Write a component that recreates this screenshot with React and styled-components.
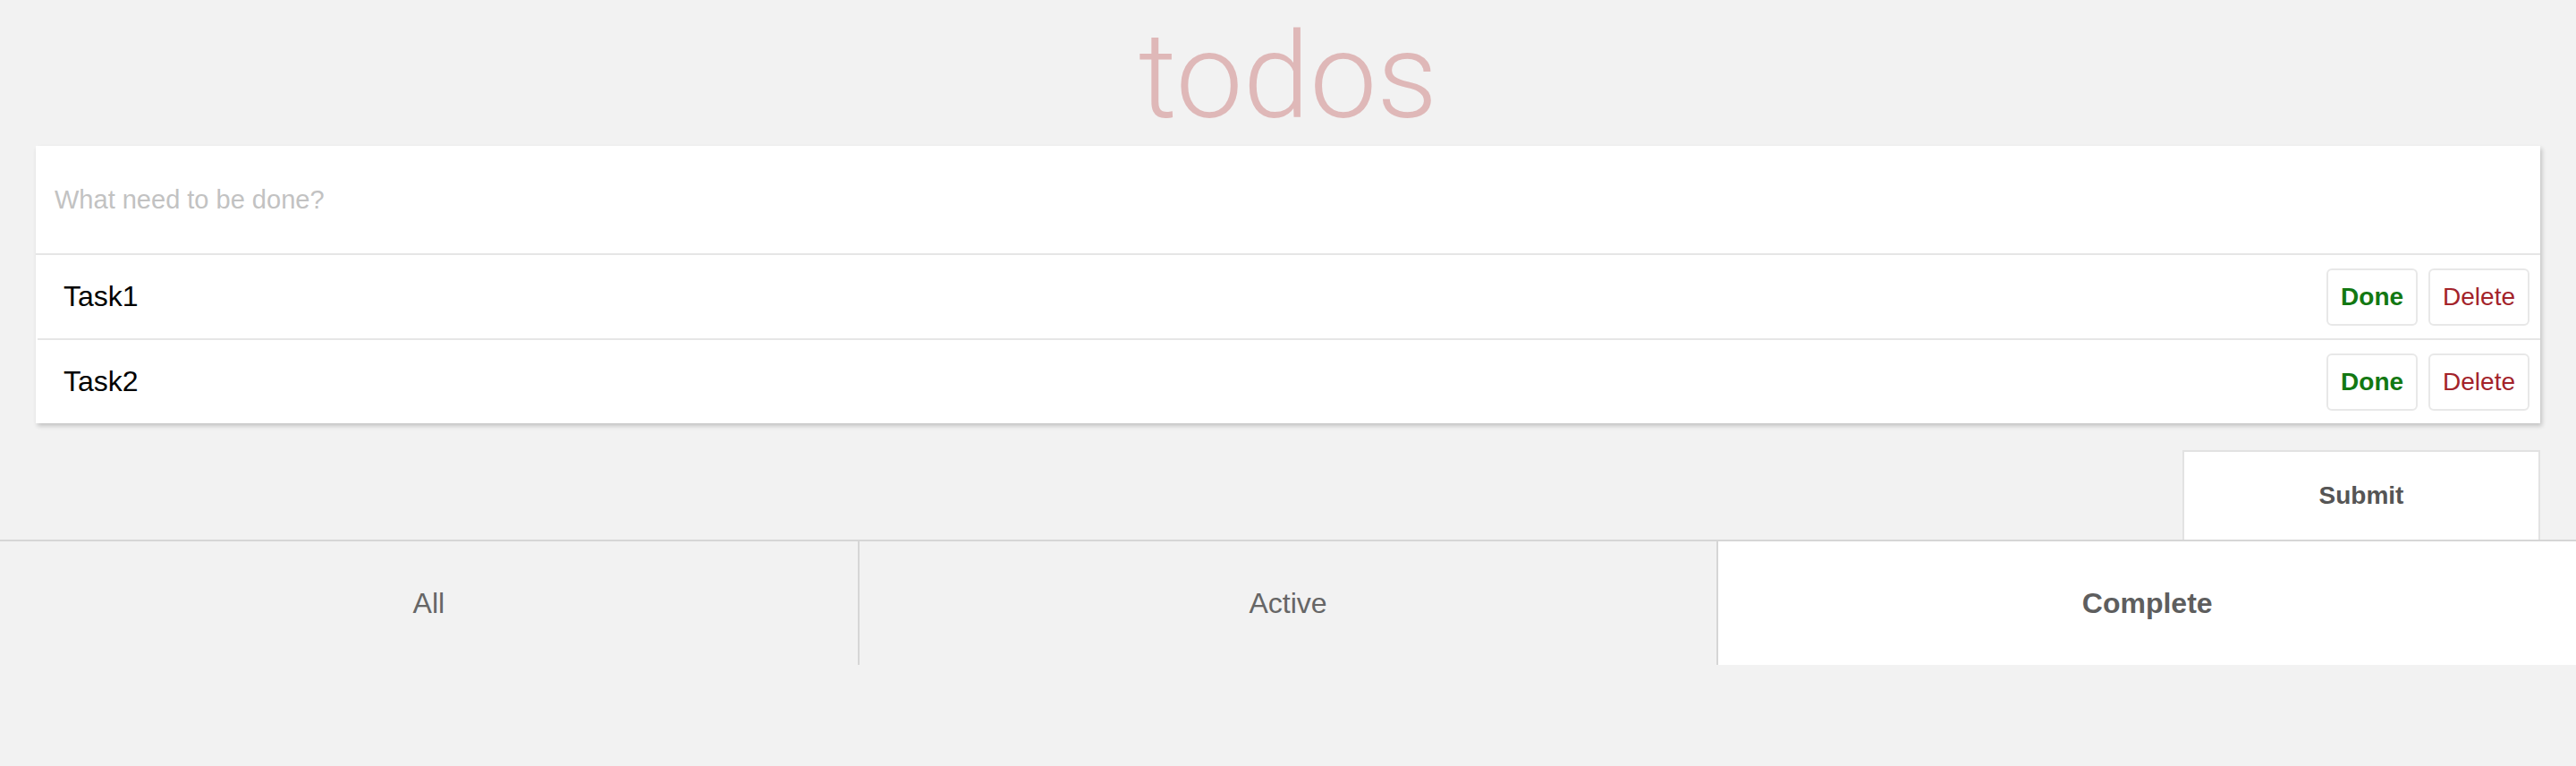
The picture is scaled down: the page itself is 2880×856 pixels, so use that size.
import React, { useState } from 'react'
import styled, { createGlobalStyle } from 'styled-components'

const GlobalStyle = createGlobalStyle`
  html, body {
    margin: 0;
    padding: 0;
    background: #f2f2f2;
    font-family: "Liberation Sans", Arial, sans-serif;
  }
`

const TABS = ['All', 'Active', 'Complete']

const INITIAL_TODOS = [
  { id: 1, title: 'Task1' },
  { id: 2, title: 'Task2' }
]

export default function App () {
  const [todos, setTodos] = useState(INITIAL_TODOS)
  const [filter, setFilter] = useState('Complete')

  const removeTodo = (id) => setTodos(todos.filter(todo => todo.id !== id))

  return (
    <>
      <GlobalStyle />
      <Page>
        <Title>todos</Title>

        <Card>
          <NewTodo placeholder='What need to be done?' />
          <TodoList>
            {todos.map(todo =>
              <TodoRow key={todo.id}>
                <TodoTitle>{todo.title}</TodoTitle>
                <Actions>
                  <RowButton $kind='done'>Done</RowButton>
                  <RowButton $kind='delete' onClick={() => removeTodo(todo.id)}>Delete</RowButton>
                </Actions>
              </TodoRow>
            )}
          </TodoList>
        </Card>

        <SubmitWrapper>
          <SubmitButton>Submit</SubmitButton>
        </SubmitWrapper>
      </Page>

      <TabBar>
        {TABS.map(tab =>
          <Tab key={tab} $selected={filter === tab} onClick={() => setFilter(tab)}>
            {tab}
          </Tab>
        )}
      </TabBar>
    </>
  )
}

const Page = styled.div`
  padding: 0 40px;
`

const Title = styled.h1`
  margin: 19px 0 10px;
  text-align: center;
  font-family: Roboto, "Liberation Sans", sans-serif;
  font-weight: 300;
  font-size: 134px;
  line-height: 134px;
  color: #dfb8b8;
`

const Card = styled.div`
  background: #fff;
  box-shadow: 2px 3px 5px rgba(0, 0, 0, 0.2);
`

const NewTodo = styled.input`
  display: block;
  box-sizing: border-box;
  width: 100%;
  height: 122px;
  padding: 0 21px;
  border: none;
  border-bottom: 2px solid #e6e6e6;
  outline: none;
  font-family: "Liberation Sans", Arial, sans-serif;
  font-size: 29px;
  color: #333;

  &::placeholder {
    color: #c2c2c2;
  }
`

const TodoList = styled.ul`
  list-style: none;
  margin: 0 0 0 2px;
  padding: 0;
`

const TodoRow = styled.li`
  display: flex;
  align-items: center;
  justify-content: space-between;
  height: 93px;
  padding: 0 12px 0 29px;
  border-top: 2px solid #e6e6e6;

  &:first-of-type {
    border-top: none;
  }
`

const TodoTitle = styled.span`
  font-size: 32px;
  color: #000;
`

const Actions = styled.div`
  display: flex;
  gap: 12px;
`

const RowButton = styled.button`
  box-sizing: border-box;
  height: 64px;
  padding: 0 14px;
  background: #fff;
  border: 2px solid #e8e8e8;
  border-radius: 6px;
  font-family: "Liberation Sans", Arial, sans-serif;
  font-size: 28px;
  font-weight: ${({ $kind }) => $kind === 'done' ? 700 : 400};
  color: ${({ $kind }) => $kind === 'done' ? '#127812' : '#a3232a'};
  cursor: pointer;
`

const SubmitWrapper = styled.div`
  display: flex;
  justify-content: flex-end;
  margin-top: 30px;
`

const SubmitButton = styled.button`
  box-sizing: border-box;
  width: 400px;
  height: 100px;
  background: #fff;
  border: 2px solid #e2e2e2;
  border-bottom: none;
  font-family: "Liberation Sans", Arial, sans-serif;
  font-size: 28px;
  font-weight: 700;
  color: #555;
  cursor: pointer;
`

const TabBar = styled.nav`
  display: flex;
  border-top: 2px solid #d6d6d6;
`

const Tab = styled.div`
  flex: 1;
  display: flex;
  align-items: center;
  justify-content: center;
  height: 138px;
  background: ${({ $selected }) => $selected ? '#fff' : 'transparent'};
  font-size: 32px;
  font-weight: ${({ $selected }) => $selected ? 700 : 400};
  color: ${({ $selected }) => $selected ? '#5e5e5e' : '#666'};
  cursor: pointer;

  & + & {
    border-left: 2px solid #d6d6d6;
  }
`
